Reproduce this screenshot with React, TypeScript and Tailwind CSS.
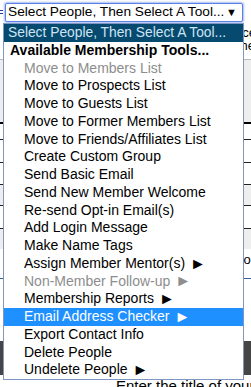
import React from "react";

type Item = { label: string; disabled?: boolean; sub?: boolean; active?: boolean };

const items: Item[] = [
  { label: "Move to Members List", disabled: true },
  { label: "Move to Prospects List" },
  { label: "Move to Guests List" },
  { label: "Move to Former Members List" },
  { label: "Move to Friends/Affiliates List" },
  { label: "Create Custom Group" },
  { label: "Send Basic Email" },
  { label: "Send New Member Welcome" },
  { label: "Re-send Opt-in Email(s)" },
  { label: "Add Login Message" },
  { label: "Make Name Tags" },
  { label: "Assign Member Mentor(s)", sub: true },
  { label: "Non-Member Follow-up", disabled: true, sub: true },
  { label: "Membership Reports", sub: true },
  { label: "Email Address Checker", sub: true, active: true },
  { label: "Export Contact Info" },
  { label: "Delete People" },
  { label: "Undelete People", sub: true },
];

function Row({ item }: { item: Item }) {
  const color = item.active
    ? "bg-[#1e90ff] text-white"
    : item.disabled
      ? "text-[#8d8d8d]"
      : "text-black";
  return (
    <div className={`flex h-[17.75px] items-center pl-[20px] leading-[17.75px] whitespace-nowrap ${color}`}>
      {item.label}
      {item.sub && <span className="ml-[5px] text-[16px] leading-none">►</span>}
    </div>
  );
}

export default function App() {
  return (
    <div className="relative w-[251px] h-[387px] overflow-hidden bg-white font-['Liberation_Sans',Arial,sans-serif] text-black">
      {/* page behind the open select */}
      <div className="flex h-[24px] items-start">
        <div className="mt-[10px] h-[4px] w-[3px] border-y border-[#2b3f8f]" />
        <div className="ml-[2px] mt-[3px] flex h-[19px] w-[238px] items-center justify-between rounded-[2px] border border-[#5b80e4] bg-white pl-[2px] pr-[5px] text-[13.7px] shadow-[0_0_2px_1px_#a6bcf6]">
          <span className="whitespace-nowrap">Select People, Then Select A Tool...</span>
          <span className="text-[11px] leading-none">▼</span>
        </div>
      </div>
      <div className="flex flex-col items-end pt-[2px] text-[13px] leading-[13px]">
        <div className="mr-[-5px] whitespace-nowrap">ce</div>
        <div className="mr-[-4px] whitespace-nowrap">he</div>
      </div>
      <div className="mt-[7px] border-t border-[#bbbbbb]" />
      <div className="h-[62px] bg-[#eeeeee]" />
      <div className="h-[2px] bg-black" />
      <div className="h-[16px] border-b border-[#222]" />
      <div className="h-[23px] border-b border-[#222]" />
      <div className="h-[22px] border-b border-[#222]" />
      <div className="h-[21px] border-b border-[#222] bg-[#eeeeee]" />
      <div className="h-[23px] border-b border-[#222]" />
      <div className="h-[20px] bg-[#eeeeee]" />
      <div className="flex h-[22px] items-center justify-end text-[13px]">
        <span className="mr-[-4px]">or</span>
      </div>
      <div className="h-[8px] border-b border-[#3a5f9a]" />
      <div className="h-[62px]" />
      <div className="h-[34px] bg-[#454545]" />
      <div className="flex items-center gap-[4px] pl-[112px] pt-[3px] text-[15px] leading-[15px] whitespace-nowrap">
        <span className="inline-block h-[12px] w-[12px] rounded-full bg-[#333]" />
        <span>Enter the title of your</span>
      </div>

      {/* open dropdown list */}
      <div className="absolute left-[3px] top-[23px] w-[241px] border border-[#7f95c2] bg-white text-[14px]">
        <div className="h-[17.75px] bg-[#064a70] pl-[4px] text-[13.8px] leading-[17.75px] whitespace-nowrap text-[#cfe5f3]">
          Select People, Then Select A Tool...
        </div>
        <div className="h-[17.75px] pl-[6px] font-bold leading-[17.75px] whitespace-nowrap">
          Available Membership Tools...
        </div>
        {items.map((item) => (
          <Row key={item.label} item={item} />
        ))}
      </div>
    </div>
  );
}
